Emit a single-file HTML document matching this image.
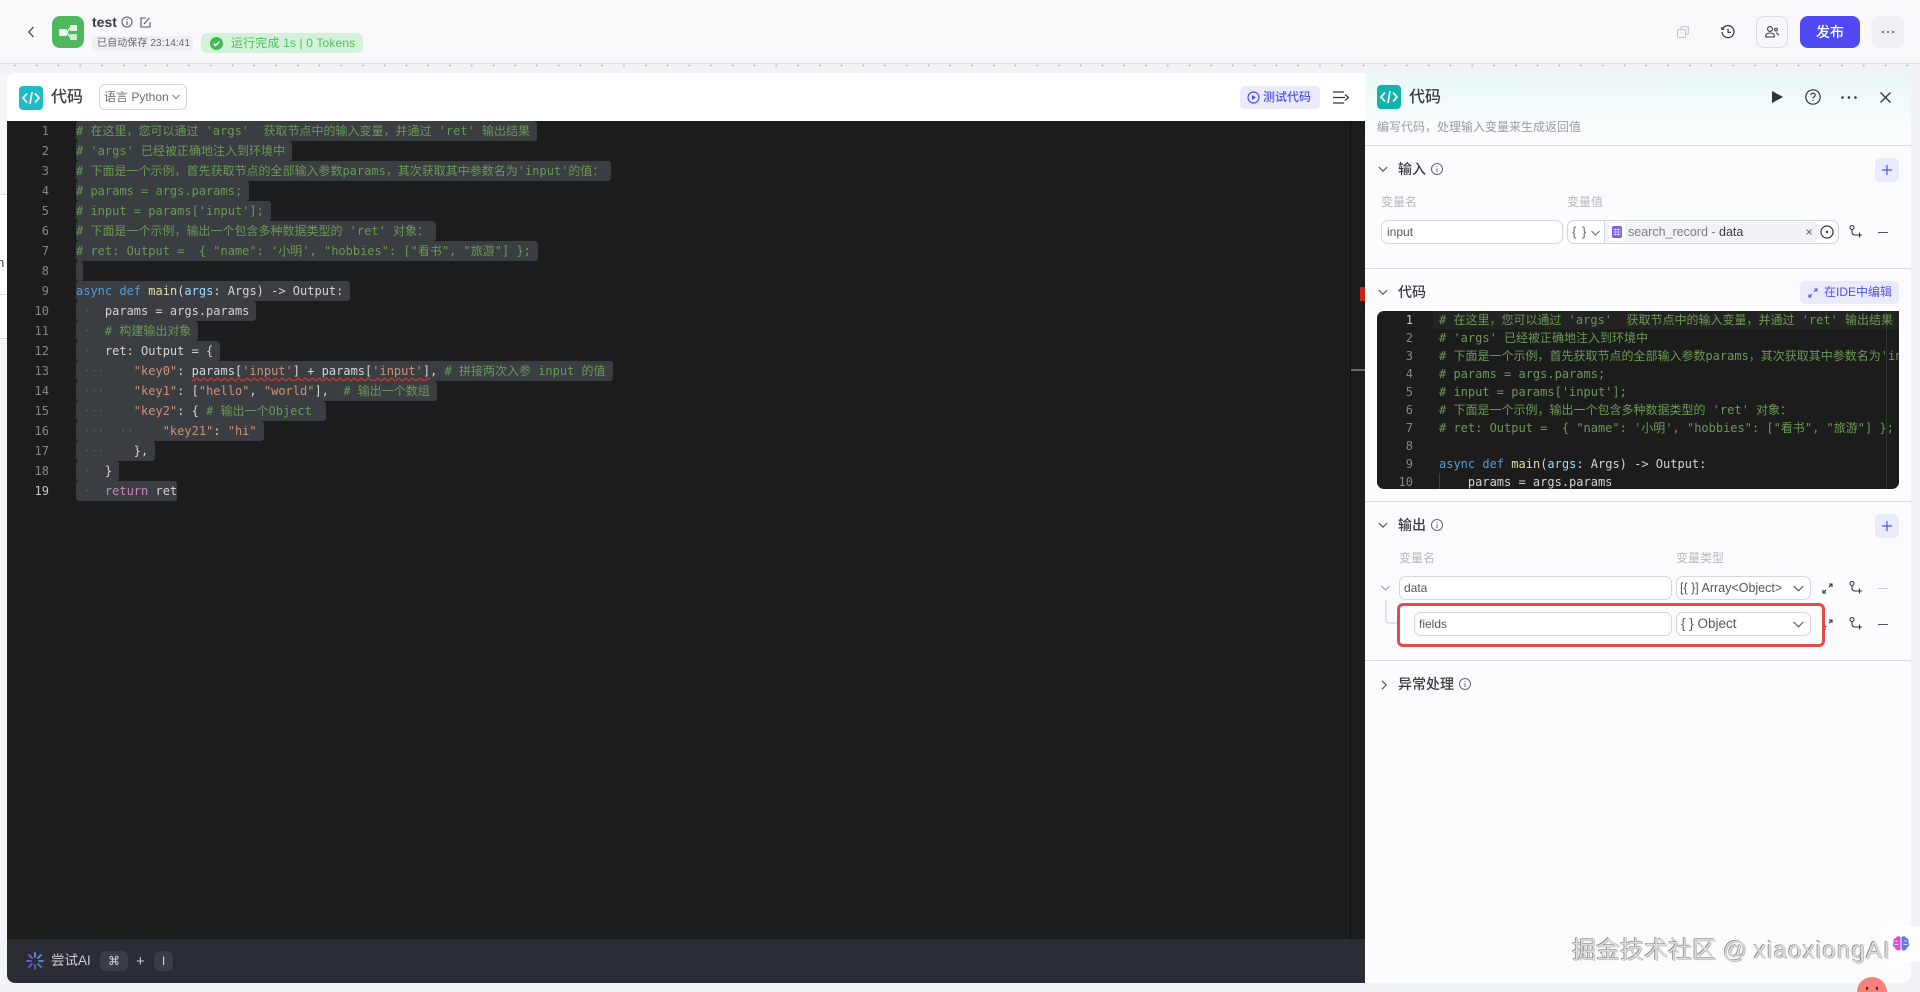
<!DOCTYPE html>
<html lang="zh">
<head>
<meta charset="utf-8">
<title>test</title>
<style>
*{box-sizing:border-box;margin:0;padding:0}
html,body{width:1920px;height:992px;overflow:hidden;background:#f2f3f7;font-family:"Liberation Sans","Noto Sans CJK SC",sans-serif;color:#33343a}
#root{position:absolute;left:0;top:0;width:1920px;height:992px;overflow:hidden;background:#f2f3f7}
.a{position:absolute}
svg{position:absolute;overflow:visible}
.t{position:absolute;white-space:pre;line-height:1}
.box{position:absolute;background:#fff;border:1px solid #d4d6dd;border-radius:7px}
.hr{position:absolute;left:1365px;width:546px;height:1px;background:#dfe0e6}
.lbl{position:absolute;font-size:12px;color:#b6b8c0;line-height:14px;white-space:pre}
.sec{position:absolute;font-size:14px;font-weight:500;color:#3a3b42;line-height:16px;white-space:pre}
.code{font-family:"DejaVu Sans Mono","Noto Sans CJK SC",monospace;font-size:12px;white-space:pre}
.l{position:absolute;left:76px;height:20px;line-height:20px;display:block}
.s{display:inline-block;height:20px;background:#3a3d41;padding-right:7px;border-radius:3px;vertical-align:top}
.n{position:absolute;left:10px;width:39px;text-align:right;height:20px;line-height:20px;color:#858585}
.c{color:#6a9955}.k{color:#569cd6}.f{color:#dcdcaa}.v{color:#9cdcfe}.q{color:#ce9178}.r{color:#c586c0}.w{color:#d4d4d4}.d{color:#565a60}
.m{position:absolute;left:1439px;height:18px;line-height:18px;display:block}
.mn{position:absolute;left:1377px;width:36px;text-align:right;height:18px;line-height:18px;color:#858585}
</style>
</head>
<body>
<div id="root">

<!-- top bar -->
<div class="a" style="left:0;top:0;width:1920px;height:63px;background:#f9f9fc"></div>
<div class="a" style="left:0;top:63px;width:1920px;height:1px;background:#dcdde3"></div>
<div class="a" style="left:0;top:64px;width:1920px;height:9px;background:radial-gradient(circle at 15px 1.5px,#b4b6bd 0.8px,transparent 1.1px) 0 0/21.75px 9px repeat-x #f2f3f7"></div>

<svg style="left:26px;top:25px" width="10" height="14" viewBox="0 0 10 14"><path d="M7.5 2 L2.8 7 L7.5 12" fill="none" stroke="#3a3b42" stroke-width="1.2"/></svg>
<div class="a" style="left:52px;top:16px;width:32px;height:32px;border-radius:8px;background:#4fb85c"></div>
<svg style="left:59px;top:25px" width="18" height="15" viewBox="0 0 18 15"><rect x="0" y="4" width="8" height="7" rx="1" fill="#e8f6e9"/><rect x="11" y="0" width="7" height="6" rx="1" fill="#e8f6e9"/><rect x="11" y="9" width="7" height="6" rx="1" fill="#cdeccf"/><path d="M8 7.5 L11 3 M8 7.5 L11 12" stroke="#e8f6e9" stroke-width="1.2"/></svg>
<div class="t" style="left:92px;top:14px;font-size:14px;font-weight:700;color:#3a3b42;line-height:16px">test</div>
<svg style="left:121px;top:16px" width="12" height="12" viewBox="0 0 12 12"><circle cx="6" cy="6" r="5" fill="none" stroke="#55565c" stroke-width="1"/><path d="M6 5.200V9M6 3v1" stroke="#55565c" stroke-width="1.100"/></svg>
<svg style="left:140px;top:17px" width="11" height="11" viewBox="0 0 11 11"><path d="M6 1H1v9h9V5M4 7 9.500 1" fill="none" stroke="#55565c" stroke-width="1.100"/></svg>
<div class="a" style="left:92px;top:36px;width:101px;height:15px;background:#eef0f5;border-radius:3px"></div>
<div class="t" style="left:97px;top:37px;font-size:10px;letter-spacing:.1px;color:#66676d;line-height:14px">已自动保存 23:14:41</div>
<div class="a" style="left:201px;top:33px;width:162px;height:20px;background:#d2f3d7;border-radius:6px"></div>
<div class="a" style="left:210px;top:37px;width:13px;height:13px;border-radius:50%;background:#42b957"></div>
<svg style="left:210px;top:37px" width="13" height="13" viewBox="0 0 13 13"><path d="M3.600 6.600 5.600 8.600 9.400 4.600" fill="none" stroke="#fff" stroke-width="1.500"/></svg>
<div class="t" style="left:231px;top:35px;font-size:12px;letter-spacing:.15px;color:#4fbf60;line-height:16px">运行完成 1s | 0 Tokens</div>

<svg style="left:1677px;top:26px" width="12" height="12" viewBox="0 0 12 12"><rect x="0.500" y="3.500" width="8" height="8" rx="1" fill="none" stroke="#c2c3c8"/><path d="M4 3V.800h7.300V8H9M4 5.500V7" fill="none" stroke="#c2c3c8"/></svg>
<svg style="left:1721px;top:25px" width="14" height="14" viewBox="0 0 14 14"><path d="M1.600 4A6 6 0 1 1 1 7" fill="none" stroke="#2f3036" stroke-width="1.200"/><path d="M7 3.600V7.300H10" fill="none" stroke="#2f3036" stroke-width="1.200"/><path d="M0.800 2v2.400h2.400" fill="none" stroke="#2f3036" stroke-width="1"/></svg>
<div class="a" style="left:1756px;top:16px;width:32px;height:32px;border:1px solid #dcdde3;border-radius:8px"></div>
<svg style="left:1765px;top:26px" width="14" height="12" viewBox="0 0 14 12"><circle cx="5" cy="3" r="2.400" fill="none" stroke="#33343a" stroke-width="1.100"/><path d="M.800 11V9.600C.800 8 2.500 7 5 7s4.200 1 4.200 2.600V11z" fill="none" stroke="#33343a" stroke-width="1.100"/><circle cx="11" cy="3.600" r="1.400" fill="none" stroke="#33343a"/><path d="M11 7c1.400.200 2.400 1 2.400 2.400" fill="none" stroke="#33343a"/></svg>
<div class="a" style="left:1800px;top:16px;width:60px;height:32px;background:#4f4af3;border-radius:8px;color:#fff;font-size:14px;font-weight:500;line-height:32px;text-align:center">发布</div>
<div class="a" style="left:1872px;top:16px;width:32px;height:32px;background:#eff0f6;border-radius:8px"></div>
<svg style="left:1882px;top:31px" width="12" height="2" viewBox="0 0 12 2"><circle cx="1" cy="1" r="1" fill="#55565c"/><circle cx="6" cy="1" r="1" fill="#55565c"/><circle cx="11" cy="1" r="1" fill="#55565c"/></svg>

<!-- left sliver -->
<div class="a" style="left:0;top:73px;width:7px;height:122px;background:#f7f7f8"></div>
<div class="a" style="left:0;top:194px;width:7px;height:1px;background:#dcdde3"></div>
<div class="a" style="left:0;top:195px;width:7px;height:145px;background:#fff"></div>
<div class="a" style="left:0;top:294px;width:7px;height:1px;background:#dcdde3"></div>
<div class="a" style="left:0;top:338px;width:7px;height:1px;background:#dcdde3"></div>
<div class="t" style="left:-3px;top:255px;font-size:13px;color:#44454b;line-height:15px">n</div>

<!-- left panel -->
<div class="a" style="left:7px;top:73px;width:1358px;height:48px;background:#fff;border-radius:8px 0 0 0"></div>
<div class="a" style="left:19px;top:86px;width:24px;height:24px;background:#1fbcc4;border-radius:4px"></div>
<svg style="left:22px;top:91px" width="18" height="14" viewBox="0 0 18 14"><path d="M5 2.500 1 7l4 4.500M13 2.500l4 4.500-4 4.500M10 1 8 13" fill="none" stroke="#fff" stroke-width="1.700"/></svg>
<div class="t" style="left:51px;top:88px;font-size:16px;font-weight:500;color:#3a3b42;line-height:20px">代码</div>
<div class="a" style="left:99px;top:84px;width:88px;height:26px;border:1px solid #d4d6dd;border-radius:6px;background:#fff"></div>
<div class="t" style="left:104px;top:89px;font-size:12px;color:#6c6d73;line-height:16px">语言 Python</div>
<svg style="left:172px;top:94px" width="8" height="6" viewBox="0 0 8 6"><path d="M.500 1 4 4.500 7.500 1" fill="none" stroke="#77787e"/></svg>
<div class="a" style="left:1240px;top:86px;width:80px;height:23px;background:#e9ebfb;border-radius:5px"></div>
<svg style="left:1247px;top:91px" width="13" height="13" viewBox="0 0 13 13"><circle cx="6.500" cy="6.500" r="5.500" fill="none" stroke="#4d53e8" stroke-width="1.200"/><path d="M5 4v5l4-2.500z" fill="#4d53e8"/></svg>
<div class="t" style="left:1263px;top:90px;font-size:12px;font-weight:500;color:#4d53e8;line-height:15px">测试代码</div>
<svg style="left:1333px;top:91px" width="16" height="13" viewBox="0 0 16 13"><path d="M0 1h11M0 6.500h12M0 12h11M12 3.500 15.500 6.500l-3.500 3" fill="none" stroke="#33343a" stroke-width="1.200"/></svg>

<!-- editor -->
<div class="a" style="left:7px;top:121px;width:1358px;height:818px;background:#1c1c1c"></div>
<div class="a" style="left:1350px;top:121px;width:1px;height:818px;background:#0e0e0e"></div>
<div class="a" style="left:1360px;top:287px;width:5px;height:14px;background:#c8201f"></div>
<div class="a" style="left:1351px;top:369px;width:14px;height:2px;background:#6a6a6a"></div>

<div class="code">
<div class="n" style="top:121px">1</div>
<div class="n" style="top:141px">2</div>
<div class="n" style="top:161px">3</div>
<div class="n" style="top:181px">4</div>
<div class="n" style="top:201px">5</div>
<div class="n" style="top:221px">6</div>
<div class="n" style="top:241px">7</div>
<div class="n" style="top:261px">8</div>
<div class="n" style="top:281px">9</div>
<div class="n" style="top:301px">10</div>
<div class="n" style="top:321px">11</div>
<div class="n" style="top:341px">12</div>
<div class="n" style="top:361px">13</div>
<div class="n" style="top:381px">14</div>
<div class="n" style="top:401px">15</div>
<div class="n" style="top:421px">16</div>
<div class="n" style="top:441px">17</div>
<div class="n" style="top:461px">18</div>
<div class="n" style="top:481px;color:#c6c6c6">19</div>

<div class="l" style="top:121px"><span class="s c"># 在这里，您可以通过 'args'  获取节点中的输入变量，并通过 'ret' 输出结果</span></div>
<div class="l" style="top:141px"><span class="s c"># 'args' 已经被正确地注入到环境中</span></div>
<div class="l" style="top:161px"><span class="s c"># 下面是一个示例，首先获取节点的全部输入参数params，其次获取其中参数名为'input'的值：</span></div>
<div class="l" style="top:181px"><span class="s c"># params = args.params;</span></div>
<div class="l" style="top:201px"><span class="s c"># input = params['input'];</span></div>
<div class="l" style="top:221px"><span class="s c"># 下面是一个示例，输出一个包含多种数据类型的 'ret' 对象：</span></div>
<div class="l" style="top:241px"><span class="s c"># ret: Output =  { "name": '小明', "hobbies": ["看书", "旅游"] };</span></div>
<div class="l" style="top:261px"><span class="s"></span></div>
<div class="l" style="top:281px"><span class="s w"><span class="k">async</span> <span class="k">def</span> <span class="f">main</span>(<span class="v">args</span>: Args) -&gt; Output:</span></div>
<div class="l" style="top:301px"><span class="s w"><span class="d"> ·  </span>params = args.params</span></div>
<div class="l" style="top:321px"><span class="s w"><span class="d"> ·  </span><span class="c"># 构建输出对象</span></span></div>
<div class="l" style="top:341px"><span class="s w"><span class="d"> ·  </span>ret: Output = {</span></div>
<div class="l" style="top:361px"><span class="s w"><span class="d"> ···    </span><span class="q">"key0"</span>: <span style="text-decoration:underline wavy #e0403f;text-decoration-thickness:1px;text-underline-offset:2px">params[<span class="q">'input'</span>] + params[<span class="q">'input'</span>]</span>, <span class="c"># 拼接两次入参 input 的值</span></span></div>
<div class="l" style="top:381px"><span class="s w"><span class="d"> ···    </span><span class="q">"key1"</span>: [<span class="q">"hello"</span>, <span class="q">"world"</span>],  <span class="c"># 输出一个数组</span></span></div>
<div class="l" style="top:401px"><span class="s w"><span class="d"> ···    </span><span class="q">"key2"</span>: { <span class="c"># 输出一个Object </span></span></div>
<div class="l" style="top:421px"><span class="s w"><span class="d"> ···  ··    </span><span class="q">"key21"</span>: <span class="q">"hi"</span></span></div>
<div class="l" style="top:441px"><span class="s w"><span class="d"> ···    </span>},</span></div>
<div class="l" style="top:461px"><span class="s w"><span class="d"> ·  </span>}</span></div>
<div class="l" style="top:481px"><span class="s w" style="padding-right:0"><span class="d"> ·  </span><span class="r">return</span> ret</span></div>
</div>

<!-- AI bar -->
<div class="a" style="left:7px;top:939px;width:1358px;height:44px;background:#2b2d35;border-radius:0 0 0 8px"></div>
<svg style="left:26px;top:952px" width="18" height="18" viewBox="0 0 18 18"><g stroke-width="1.800" stroke-linecap="round"><path d="M9 1v4" stroke="#8a7fe8"/><path d="M15 3 12 6" stroke="#5d8fe8"/><path d="M17 9h-4" stroke="#5d8fe8"/><path d="M15 15 12 12" stroke="#6a6ce0"/><path d="M9 17v-4" stroke="#5d5ce0"/><path d="M3 15l3-3" stroke="#5d5ce0"/><path d="M1 9h4" stroke="#7a5fe0"/><path d="M3 3l3 3" stroke="#7a5fe0"/></g></svg>
<div class="t" style="left:51px;top:953px;font-size:13.500px;color:#c9cad0;line-height:16px">尝试AI</div>
<div class="a" style="left:100px;top:951px;width:28px;height:20px;background:#3b3d46;border-radius:6px;color:#d6d7dc;font-size:12px;line-height:20px;text-align:center;font-family:'DejaVu Sans',sans-serif">⌘</div>
<div class="t" style="left:136px;top:953px;font-size:15px;color:#d0d1d6;line-height:17px">+</div>
<div class="a" style="left:154px;top:951px;width:19px;height:20px;background:#3b3d46;border-radius:6px;color:#d6d7dc;font-size:12px;line-height:20px;text-align:center">I</div>

<!-- right panel -->
<div class="a" style="left:1365px;top:73px;width:546px;height:910px;background:#fcfcfe;border-radius:0 8px 8px 0"></div>
<div class="a" style="left:1365px;top:73px;width:546px;height:72px;background:linear-gradient(180deg,#e9f8f7 0%,#f4fbfb 45%,#fcfcfe 100%);border-radius:0 8px 0 0"></div>
<div class="a" style="left:1377px;top:85px;width:24px;height:24px;background:#12b3ab;border-radius:4px"></div>
<svg style="left:1380px;top:90px" width="18" height="14" viewBox="0 0 18 14"><path d="M5 2.500 1 7l4 4.500M13 2.500l4 4.500-4 4.500M10 1 8 13" fill="none" stroke="#fff" stroke-width="1.700"/></svg>
<div class="t" style="left:1409px;top:88px;font-size:16px;font-weight:500;color:#3a3b42;line-height:20px">代码</div>
<svg style="left:1772px;top:91px" width="11" height="12" viewBox="0 0 11 12"><path d="M0 0 11 6 0 12z" fill="#33343a"/></svg>
<svg style="left:1805px;top:89px" width="16" height="16" viewBox="0 0 16 16"><circle cx="8" cy="8" r="7.200" fill="none" stroke="#33343a" stroke-width="1.200"/><path d="M5.800 6.200C5.800 4.900 6.800 4.200 8 4.200s2.200.800 2.200 1.900c0 1.700-2.200 1.700-2.200 3.400M8 11v1" fill="none" stroke="#33343a" stroke-width="1.200"/></svg>
<svg style="left:1841px;top:96px" width="16" height="3" viewBox="0 0 16 3"><circle cx="1.500" cy="1.500" r="1.300" fill="#33343a"/><circle cx="8" cy="1.500" r="1.300" fill="#33343a"/><circle cx="14.500" cy="1.500" r="1.300" fill="#33343a"/></svg>
<svg style="left:1880px;top:92px" width="11" height="11" viewBox="0 0 11 11"><path d="M.500.500l10 10M10.500.500l-10 10" stroke="#33343a" stroke-width="1.300"/></svg>
<div class="t" style="left:1377px;top:120px;font-size:12px;color:#9a9ba2;line-height:15px">编写代码，处理输入变量来生成返回值</div>
<div class="hr" style="top:145px;background:#d9dbe1"></div>

<!-- input section -->
<svg style="left:1378px;top:166px" width="10" height="7" viewBox="0 0 10 7"><path d="M.800 1 5 5.200 9.200 1" fill="none" stroke="#55565c" stroke-width="1.200"/></svg>
<div class="sec" style="left:1398px;top:161px">输入</div>
<svg style="left:1431px;top:163px" width="12" height="12" viewBox="0 0 12 12"><circle cx="6" cy="6" r="5.500" fill="none" stroke="#66676d"/><path d="M6 5.200V9M6 3v1" stroke="#66676d"/></svg>
<div class="a" style="left:1875px;top:158px;width:24px;height:24px;background:#e9ebfb;border-radius:5px"></div>
<svg style="left:1882px;top:165px" width="10" height="10" viewBox="0 0 10 10"><path d="M5 0v10M0 5h10" stroke="#4d53e8" stroke-width="1.200"/></svg>
<div class="lbl" style="left:1381px;top:195px">变量名</div>
<div class="lbl" style="left:1567px;top:195px">变量值</div>
<div class="box" style="left:1381px;top:220px;width:182px;height:24px"></div>
<div class="t" style="left:1387px;top:225px;font-size:12px;color:#55565c;line-height:15px">input</div>
<div class="box" style="left:1567px;top:220px;width:272px;height:24px"></div>
<div class="t" style="left:1572px;top:224px;font-size:13px;letter-spacing:1px;color:#66676d;line-height:16px">{ }</div>
<svg style="left:1591px;top:230px" width="9" height="6" viewBox="0 0 9 6"><path d="M.500 1 4.500 5 8.500 1" fill="none" stroke="#66676d"/></svg>
<div class="a" style="left:1604px;top:221px;width:1px;height:22px;background:#d4d6dd"></div>
<div class="a" style="left:1605px;top:222px;width:212px;height:20px;background:#f1f3f8;border-radius:3px"></div>
<div class="a" style="left:1609px;top:223px;width:16px;height:18px;background:#fff;border-radius:3px"></div>
<div class="a" style="left:1612px;top:226px;width:10px;height:12px;background:#7c5be0;border-radius:2px"></div>
<svg style="left:1613px;top:228px" width="8" height="8" viewBox="0 0 8 8"><path d="M0 1.500h8M0 4h8M0 6.500h8M2.700 0v8M5.300 0v8" stroke="#d9cffa" stroke-width=".800"/></svg>
<div class="t" style="left:1628px;top:224px;font-size:12.500px;color:#7d7e85;line-height:16px">search_record - <span style="color:#3a3b42">data</span></div>
<svg style="left:1806px;top:229px" width="6" height="6" viewBox="0 0 6 6"><path d="M.500.500l5 5M5.500.500l-5 5" stroke="#66676d"/></svg>
<svg style="left:1820px;top:225px" width="14" height="14" viewBox="0 0 14 14"><circle cx="7" cy="7" r="6" fill="none" stroke="#33343a" stroke-width="1.200"/><circle cx="7" cy="7" r="1.200" fill="#33343a"/></svg>
<svg style="left:1849px;top:225px" width="13" height="14" viewBox="0 0 13 14"><circle cx="3" cy="2.500" r="2" fill="none" stroke="#33343a" stroke-width="1.100"/><path d="M3 4.500V7c0 2 1 3 3 3h2" fill="none" stroke="#33343a" stroke-width="1.100"/><path d="M10.500 7.500v5M8 10h5" stroke="#33343a" stroke-width="1.100"/></svg>
<div class="a" style="left:1878px;top:232px;width:10px;height:1.200px;background:#55565c"></div>
<div class="hr" style="top:268px;background:#d9dbe1"></div>

<!-- code section -->
<svg style="left:1378px;top:289px" width="10" height="7" viewBox="0 0 10 7"><path d="M.800 1 5 5.200 9.200 1" fill="none" stroke="#55565c" stroke-width="1.200"/></svg>
<div class="sec" style="left:1398px;top:284px">代码</div>
<div class="a" style="left:1800px;top:281px;width:99px;height:23px;background:#e9ebfb;border-radius:5px"></div>
<svg style="left:1808px;top:288px" width="10" height="10" viewBox="0 0 10 10"><path d="M6.500 1H9v2.500M9 1 6 4M1 6.500V9h2.500M1 9l3-3" fill="none" stroke="#4d53e8" stroke-width="1.100"/></svg>
<div class="t" style="left:1824px;top:285px;font-size:12px;color:#4d53e8;line-height:15px">在IDE中编辑</div>

<div class="a" style="left:1377px;top:311px;width:522px;height:178px;background:#1c1c1c;border-radius:7px;overflow:hidden"></div>
<div class="a" style="left:1433px;top:311px;width:466px;height:18px;background:#232323"></div>
<div class="a" style="left:1886px;top:311px;width:1px;height:178px;background:#333"></div>
<div class="a" style="left:1439px;top:473px;width:1px;height:16px;background:#404040"></div>
<div class="a code" style="left:0;top:0;width:1899px;height:489px;overflow:hidden">
<div class="mn" style="top:311px;color:#c6c6c6">1</div>
<div class="mn" style="top:329px">2</div>
<div class="mn" style="top:347px">3</div>
<div class="mn" style="top:365px">4</div>
<div class="mn" style="top:383px">5</div>
<div class="mn" style="top:401px">6</div>
<div class="mn" style="top:419px">7</div>
<div class="mn" style="top:437px">8</div>
<div class="mn" style="top:455px">9</div>
<div class="mn" style="top:473px">10</div>
<div class="m c" style="top:311px"># 在这里，您可以通过 'args'  获取节点中的输入变量，并通过 'ret' 输出结果</div>
<div class="m c" style="top:329px"># 'args' 已经被正确地注入到环境中</div>
<div class="m c" style="top:347px"># 下面是一个示例，首先获取节点的全部输入参数params，其次获取其中参数名为'input'的值：</div>
<div class="m c" style="top:365px"># params = args.params;</div>
<div class="m c" style="top:383px"># input = params['input'];</div>
<div class="m c" style="top:401px"># 下面是一个示例，输出一个包含多种数据类型的 'ret' 对象：</div>
<div class="m c" style="top:419px"># ret: Output =  { "name": '小明', "hobbies": ["看书", "旅游"] };</div>
<div class="m w" style="top:455px"><span class="k">async</span> <span class="k">def</span> <span class="f">main</span>(<span class="v">args</span>: Args) -&gt; Output:</div>
<div class="m w" style="top:473px">    params = args.params</div>
</div>
<div class="hr" style="top:501px;background:#d9dbe1"></div>

<!-- output section -->
<svg style="left:1378px;top:522px" width="10" height="7" viewBox="0 0 10 7"><path d="M.800 1 5 5.200 9.200 1" fill="none" stroke="#55565c" stroke-width="1.200"/></svg>
<div class="sec" style="left:1398px;top:517px">输出</div>
<svg style="left:1431px;top:519px" width="12" height="12" viewBox="0 0 12 12"><circle cx="6" cy="6" r="5.500" fill="none" stroke="#66676d"/><path d="M6 5.200V9M6 3v1" stroke="#66676d"/></svg>
<div class="a" style="left:1875px;top:514px;width:24px;height:24px;background:#e9ebfb;border-radius:5px"></div>
<svg style="left:1882px;top:521px" width="10" height="10" viewBox="0 0 10 10"><path d="M5 0v10M0 5h10" stroke="#4d53e8" stroke-width="1.200"/></svg>
<div class="lbl" style="left:1399px;top:551px">变量名</div>
<div class="lbl" style="left:1676px;top:551px">变量类型</div>

<svg style="left:1381px;top:585px" width="9" height="6" viewBox="0 0 9 6"><path d="M.500 1 4.500 5 8.500 1" fill="none" stroke="#9a9ba2"/></svg>
<svg style="left:1385px;top:600px" width="14" height="25" viewBox="0 0 14 25"><path d="M1 0v20q0 3 3 3h9" fill="none" stroke="#c8c9cf"/></svg>

<div class="box" style="left:1399px;top:576px;width:273px;height:24px"></div>
<div class="t" style="left:1404px;top:581px;font-size:12px;color:#55565c;line-height:15px">data</div>
<div class="box" style="left:1676px;top:576px;width:135px;height:24px"></div>
<div class="t" style="left:1680px;top:580px;font-size:12.500px;color:#55565c;line-height:16px">[{ }] Array&lt;Object&gt;</div>
<svg style="left:1793px;top:585px" width="11" height="7" viewBox="0 0 11 7"><path d="M.700 1 5.500 5.800 10.300 1" fill="none" stroke="#55565c" stroke-width="1.100"/></svg>
<svg style="left:1822px;top:583px" width="11" height="11" viewBox="0 0 11 11"><path d="M7 1h3v3M10 1 6.800 4.200M1 7v3h3M1 10l3.200-3.200" fill="none" stroke="#33343a" stroke-width="1.100"/></svg>
<svg style="left:1849px;top:581px" width="13" height="14" viewBox="0 0 13 14"><circle cx="3" cy="2.500" r="2" fill="none" stroke="#33343a" stroke-width="1.100"/><path d="M3 4.500V7c0 2 1 3 3 3h2" fill="none" stroke="#33343a" stroke-width="1.100"/><path d="M10.500 7.500v5M8 10h5" stroke="#33343a" stroke-width="1.100"/></svg>
<div class="a" style="left:1878px;top:588px;width:10px;height:1.200px;background:#c8c9cf"></div>

<div class="box" style="left:1414px;top:612px;width:258px;height:24px"></div>
<div class="t" style="left:1419px;top:617px;font-size:12px;color:#55565c;line-height:15px">fields</div>
<div class="box" style="left:1676px;top:612px;width:135px;height:24px"></div>
<div class="t" style="left:1681px;top:615px;font-size:13.500px;color:#55565c;line-height:17px">{ } Object</div>
<svg style="left:1793px;top:621px" width="11" height="7" viewBox="0 0 11 7"><path d="M.700 1 5.500 5.800 10.300 1" fill="none" stroke="#55565c" stroke-width="1.100"/></svg>
<svg style="left:1822px;top:619px" width="11" height="11" viewBox="0 0 11 11"><path d="M7 1h3v3M10 1 6.800 4.200M1 7v3h3M1 10l3.200-3.200" fill="none" stroke="#33343a" stroke-width="1.100"/></svg>
<svg style="left:1849px;top:617px" width="13" height="14" viewBox="0 0 13 14"><circle cx="3" cy="2.500" r="2" fill="none" stroke="#33343a" stroke-width="1.100"/><path d="M3 4.500V7c0 2 1 3 3 3h2" fill="none" stroke="#33343a" stroke-width="1.100"/><path d="M10.500 7.500v5M8 10h5" stroke="#33343a" stroke-width="1.100"/></svg>
<div class="a" style="left:1878px;top:624px;width:10px;height:1.200px;background:#55565c"></div>

<div class="a" style="left:1397px;top:603px;width:428px;height:44px;border:3.500px solid #e14d4b;border-radius:6px"></div>

<div class="hr" style="top:660px;background:#d9dbe1"></div>
<svg style="left:1381px;top:680px" width="7" height="10" viewBox="0 0 7 10"><path d="M1 .800 5.200 5 1 9.200" fill="none" stroke="#55565c" stroke-width="1.200"/></svg>
<div class="sec" style="left:1398px;top:676px">异常处理</div>
<svg style="left:1459px;top:678px" width="12" height="12" viewBox="0 0 12 12"><circle cx="6" cy="6" r="5.500" fill="none" stroke="#66676d"/><path d="M6 5.200V9M6 3v1" stroke="#66676d"/></svg>

<!-- bottom right -->
<div class="a" style="left:1882px;top:926px;width:38px;height:36px;background:#fff;border-radius:18px 0 0 18px"></div>
<svg style="left:1892px;top:935px" width="18" height="18" viewBox="0 0 18 18"><path d="M8.500 2C7 .800 4.500 1 4 3 1.800 3.200 .800 5.500 1.800 7.200.200 9 .800 12 3 12.500c.300 2.300 3 3.800 5.500 2.500z" fill="#d64fd8"/><path d="M9.500 2C11 .800 13.500 1 14 3c2.200.200 3.200 2.500 2.200 4.200 1.600 1.800 1 4.800-1.200 5.300-.300 2.300-3 3.800-5.500 2.500z" fill="#5a7cf0"/><path d="M3 6h3M2.500 9.500h4M12 6h3M11.500 9.500h4" stroke="#fff" stroke-width=".7" fill="none"/></svg>
<div class="a" style="left:1857px;top:977px;width:30px;height:15px;overflow:hidden"><div style="width:30px;height:30px;background:#f4827a;border-radius:50%"></div></div>
<div class="a" style="left:1866px;top:987px;width:2px;height:3px;background:#5a2b28"></div>
<div class="a" style="left:1876px;top:987px;width:2px;height:3px;background:#5a2b28"></div>
<div class="t" style="left:1572px;top:936px;font-size:24px;line-height:30px;color:#dcdcde;text-shadow:-.6px -.6px .5px #666,.6px .6px .5px #aaa">掘金技术社区 @ <span style="letter-spacing:1.200px">xiaoxiongAI</span></div>

</div>
</body>
</html>
